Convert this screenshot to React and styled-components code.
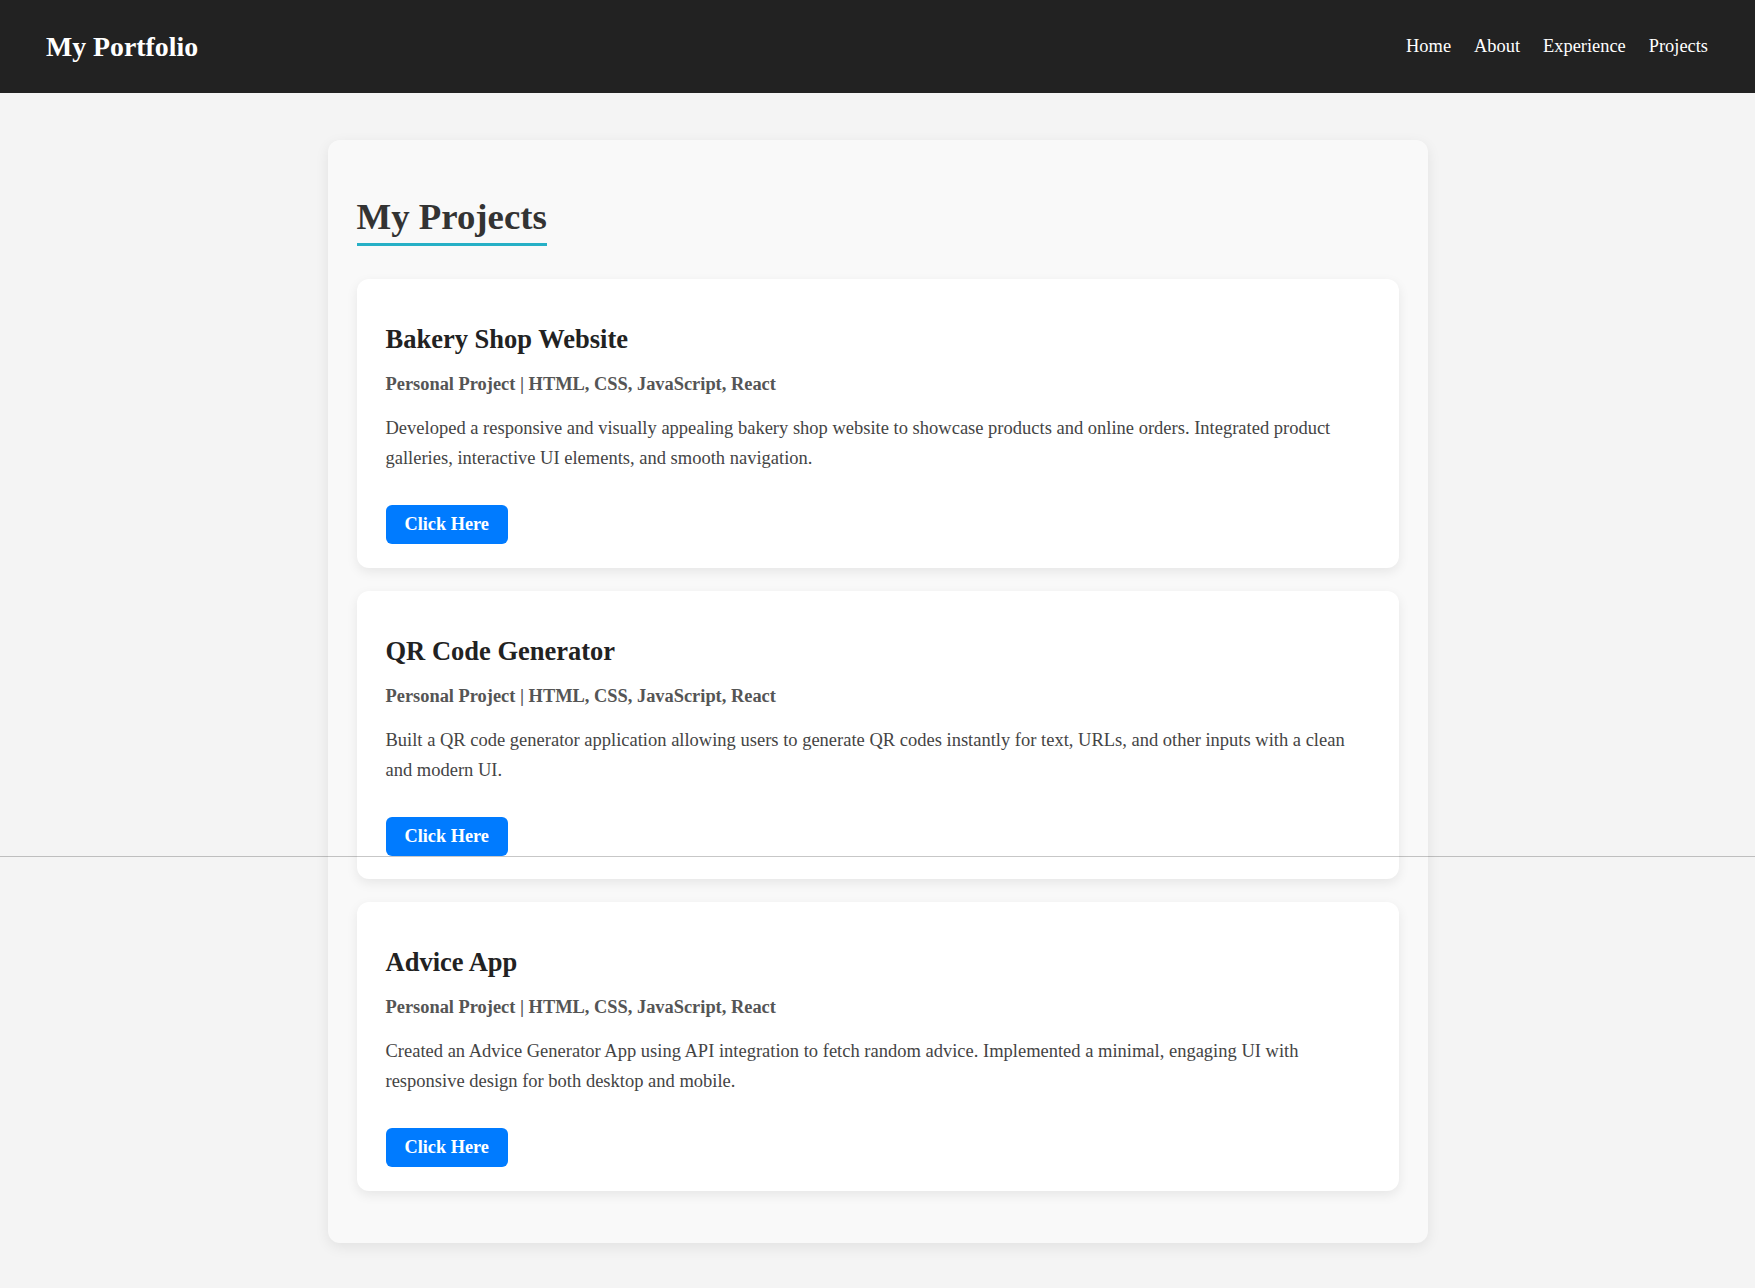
import React from 'react';
import styled, { createGlobalStyle } from 'styled-components';

const GlobalStyle = createGlobalStyle`
  * {
    box-sizing: border-box;
  }

  body {
    margin: 0;
    background-color: #f4f4f4;
    font-family: "Liberation Serif", "Times New Roman", serif;
    color: #333;
  }
`;

const Page = styled.div`
  position: relative;
  min-height: 1288px;
`;

const NavBar = styled.header`
  height: 93px;
  padding: 0 47px 0 46px;
  background-color: #222;
  display: flex;
  align-items: center;
  justify-content: space-between;
`;

const Logo = styled.div`
  font-size: 27.8px;
  font-weight: bold;
  color: #fff;
`;

const NavLinks = styled.nav`
  display: flex;
  gap: 23px;
`;

const NavLink = styled.a`
  font-size: 18.4px;
  color: #fff;
  text-decoration: none;
  cursor: pointer;
`;

const Section = styled.main`
  max-width: 1100px;
  margin: 47px auto 47px;
  padding: 55px 29px 52px;
  background-color: #f9f9f9;
  border-radius: 12px;
  box-shadow: 0 4px 14px rgba(0, 0, 0, 0.08);
`;

const SectionTitle = styled.h2`
  display: inline-block;
  margin: 0 0 33px;
  padding-bottom: 5px;
  border-bottom: 3px solid #26b0c6;
  font-size: 36.8px;
  font-weight: bold;
  color: #333;
`;

const ProjectList = styled.div`
  display: flex;
  flex-direction: column;
  gap: 23px;
`;

const Card = styled.article`
  background-color: #fff;
  border-radius: 12px;
  padding: 45px 29px 23.5px;
  box-shadow: 0 4px 12px rgba(0, 0, 0, 0.08);
`;

const CardTitle = styled.h3`
  margin: 0 0 19px;
  font-size: 26.5px;
  font-weight: bold;
  color: #222;
`;

const CardMeta = styled.p`
  margin: 0 0 18px;
  font-size: 18.4px;
  font-weight: bold;
  color: #555;
`;

const CardText = styled.p`
  margin: 0 0 32px;
  font-size: 18.5px;
  line-height: 30px;
  color: #444;
`;

const ActionButton = styled.a`
  display: inline-block;
  padding: 9px 19px 9px;
  background-color: #007bff;
  color: #fff;
  font-size: 18.3px;
  font-weight: bold;
  border-radius: 6px;
  text-decoration: none;
  cursor: pointer;
`;

const Seam = styled.div`
  position: absolute;
  top: 856px;
  left: 0;
  right: 0;
  height: 1px;
  background-color: rgba(0, 0, 0, 0.22);
  pointer-events: none;
`;

const projects = [
  {
    title: 'Bakery Shop Website',
    meta: 'Personal Project | HTML, CSS, JavaScript, React',
    text: 'Developed a responsive and visually appealing bakery shop website to showcase products and online orders. Integrated product galleries, interactive UI elements, and smooth navigation.',
  },
  {
    title: 'QR Code Generator',
    meta: 'Personal Project | HTML, CSS, JavaScript, React',
    text: 'Built a QR code generator application allowing users to generate QR codes instantly for text, URLs, and other inputs with a clean and modern UI.',
  },
  {
    title: 'Advice App',
    meta: 'Personal Project | HTML, CSS, JavaScript, React',
    text: 'Created an Advice Generator App using API integration to fetch random advice. Implemented a minimal, engaging UI with responsive design for both desktop and mobile.',
  },
];

function App() {
  return (
    <Page>
      <GlobalStyle />
      <NavBar>
        <Logo>My Portfolio</Logo>
        <NavLinks>
          <NavLink>Home</NavLink>
          <NavLink>About</NavLink>
          <NavLink>Experience</NavLink>
          <NavLink>Projects</NavLink>
        </NavLinks>
      </NavBar>

      <Section>
        <SectionTitle>My Projects</SectionTitle>
        <ProjectList>
          {projects.map((project) => (
            <Card key={project.title}>
              <CardTitle>{project.title}</CardTitle>
              <CardMeta>{project.meta}</CardMeta>
              <CardText>{project.text}</CardText>
              <ActionButton>Click Here</ActionButton>
            </Card>
          ))}
        </ProjectList>
      </Section>

      <Seam />
    </Page>
  );
}

export default App;
